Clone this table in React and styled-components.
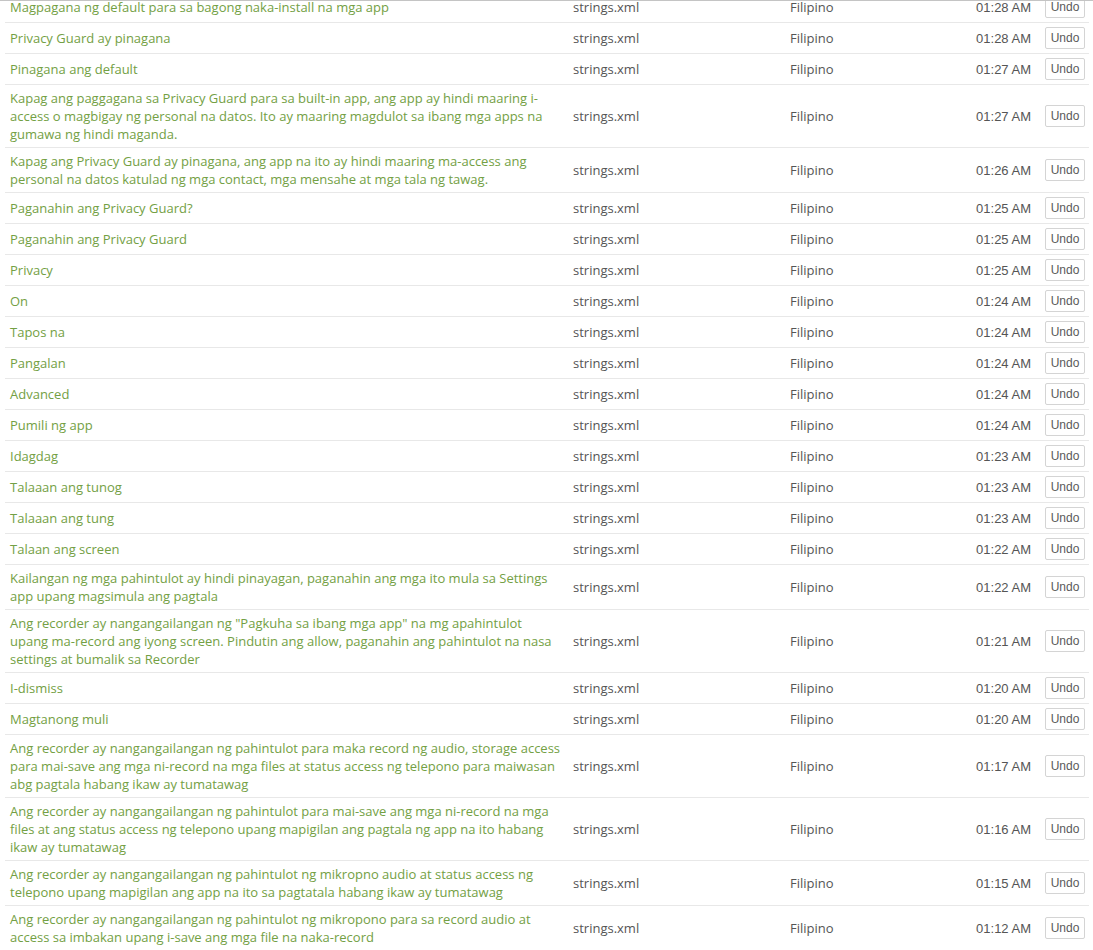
import React from 'react';
import styled, { createGlobalStyle } from 'styled-components';

const GlobalStyle = createGlobalStyle`
  html, body {
    margin: 0;
    padding: 0;
    background: #fff;
  }
  body {
    font-family: "Open Sans", "Liberation Sans", sans-serif;
    font-size: 13px;
    color: #555;
  }
`;

const Viewport = styled.div`
  overflow: hidden;
  height: 950px;
  border-top: 1px solid #c4c4c4;
  box-sizing: border-box;
`;

const Table = styled.table`
  table-layout: fixed;
  border-collapse: collapse;
  width: 1084px;
  margin: -9px 0 0 5px;
`;

const Col = styled.col`
  width: ${({ w }) => w}px;
`;

const Row = styled.tr`
  border-bottom: 1px solid #e8e8e8;
`;

const TextCell = styled.td`
  padding: 4px 0 4px 5px;
  line-height: 18px;
  vertical-align: middle;
  color: #73a044;
  white-space: pre-line;
`;

const MetaCell = styled.td`
  padding: 4px 0 4px 5px;
  line-height: 18px;
  vertical-align: middle;
  color: #555;
`;

const TimeCell = styled.td`
  padding: 5px 6px 3px 0;
  line-height: 18px;
  vertical-align: middle;
  text-align: right;
  color: #555;
  font-family: "Liberation Sans", Arial, sans-serif;
`;

const ButtonCell = styled.td`
  padding: 4px 0 4px 8px;
  vertical-align: middle;
`;

const UndoButton = styled.button`
  display: block;
  width: 40px;
  height: 22px;
  padding: 0;
  border: 1px solid #d4d4d4;
  border-radius: 2px;
  background: #fff;
  color: #5a5a5a;
  font-family: "Liberation Sans", Arial, sans-serif;
  font-size: 12px;
  cursor: pointer;
`;

const rows = [
  ['Magpagana ng default para sa bagong naka-install na mga app', '01:28 AM'],
  ['Privacy Guard ay pinagana', '01:28 AM'],
  ['Pinagana ang default', '01:27 AM'],
  [
    'Kapag ang paggagana sa Privacy Guard para sa built-in app, ang app ay hindi maaring i-access o magbigay ng personal na datos. Ito ay maaring magdulot sa ibang mga apps na gumawa ng hindi maganda.',
    '01:27 AM',
  ],
  [
    'Kapag ang Privacy Guard ay pinagana, ang app na ito ay hindi maaring ma-access ang personal na datos katulad ng mga contact, mga mensahe at mga tala ng tawag.',
    '01:26 AM',
  ],
  ['Paganahin ang Privacy Guard?', '01:25 AM'],
  ['Paganahin ang Privacy Guard', '01:25 AM'],
  ['Privacy', '01:25 AM'],
  ['On', '01:24 AM'],
  ['Tapos na', '01:24 AM'],
  ['Pangalan', '01:24 AM'],
  ['Advanced', '01:24 AM'],
  ['Pumili ng app', '01:24 AM'],
  ['Idagdag', '01:23 AM'],
  ['Talaaan ang tunog', '01:23 AM'],
  ['Talaaan ang tung', '01:23 AM'],
  ['Talaan ang screen', '01:22 AM'],
  [
    'Kailangan ng mga pahintulot ay hindi pinayagan, paganahin ang mga ito mula sa Settings app upang magsimula ang pagtala',
    '01:22 AM',
  ],
  [
    'Ang recorder ay nangangailangan ng "Pagkuha sa ibang mga app" na mg apahintulot\nupang ma-record ang iyong screen. Pindutin ang allow, paganahin ang pahintulot na nasa settings at bumalik sa Recorder',
    '01:21 AM',
  ],
  ['I-dismiss', '01:20 AM'],
  ['Magtanong muli', '01:20 AM'],
  [
    'Ang recorder ay nangangailangan ng pahintulot para maka record ng audio, storage access para mai-save ang mga ni-record na mga files at status access ng telepono para maiwasan abg pagtala habang ikaw ay tumatawag',
    '01:17 AM',
  ],
  [
    'Ang recorder ay nangangailangan ng pahintulot para mai-save ang mga ni-record na mga files at ang status access ng telepono upang mapigilan ang pagtala ng app na ito habang ikaw ay tumatawag',
    '01:16 AM',
  ],
  [
    'Ang recorder ay nangangailangan ng pahintulot ng mikropno audio at status access ng telepono upang mapigilan ang app na ito sa pagtatala habang ikaw ay tumatawag',
    '01:15 AM',
  ],
  [
    'Ang recorder ay nangangailangan ng pahintulot ng mikropono para sa record audio at access sa imbakan upang i-save ang mga file na naka-record',
    '01:12 AM',
  ],
];

const App = () => (
  <>
    <GlobalStyle />
    <Viewport>
      <Table>
        <colgroup>
          <Col w={563} />
          <Col w={217} />
          <Col w={150} />
          <Col w={102} />
          <Col w={52} />
        </colgroup>
        <tbody>
          {rows.map(([text, time], i) => (
            <Row key={i}>
              <TextCell>{text}</TextCell>
              <MetaCell>strings.xml</MetaCell>
              <MetaCell>Filipino</MetaCell>
              <TimeCell>{time}</TimeCell>
              <ButtonCell>
                <UndoButton>Undo</UndoButton>
              </ButtonCell>
            </Row>
          ))}
        </tbody>
      </Table>
    </Viewport>
  </>
);

export default App;
